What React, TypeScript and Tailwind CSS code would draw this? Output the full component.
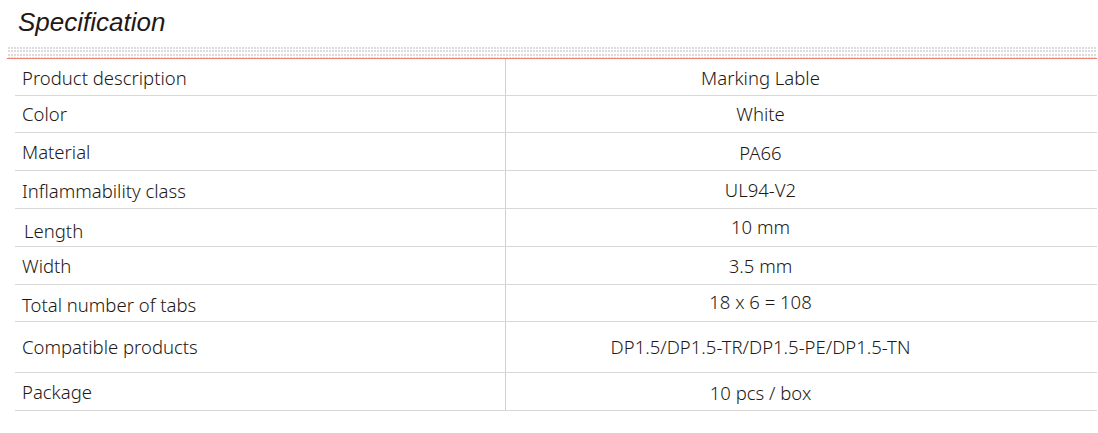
import React from "react";

type SpecRow = {
  label: string;
  value: string;
  rowClass: string;
  labelClass?: string;
  valueClass?: string;
};

const rows: SpecRow[] = [
  { label: "Product description", value: "Marking Lable", rowClass: "h-[37px]", labelClass: "pt-[1px]", valueClass: "pt-[1px]" },
  { label: "Color", value: "White", rowClass: "h-[37px]" },
  { label: "Material", value: "PA66", rowClass: "h-[38px]", valueClass: "pt-[3px]" },
  { label: "Inflammability class", value: "UL94-V2", rowClass: "h-[38px]", labelClass: "pt-[2px]" },
  { label: "Length", value: "10 mm", rowClass: "h-[38px]", labelClass: "pt-[6px] pl-[9px]", valueClass: "pb-[1px]" },
  { label: "Width", value: "3.5 mm", rowClass: "h-[38px]" },
  { label: "Total number of tabs", value: "18 x 6 = 108", rowClass: "h-[37px]", labelClass: "pt-[4px]", valueClass: "pb-[2px]" },
  { label: "Compatible products", value: "DP1.5/DP1.5-TR/DP1.5-PE/DP1.5-TN", rowClass: "h-[51px]" },
  { label: "Package", value: "10 pcs / box", rowClass: "h-[38px]", valueClass: "pt-[2px]" },
];

export default function App() {
  return (
    <div className="w-[1098px] h-[433px] bg-white text-[#231815]">
      {/* Title */}
      <div className="h-[47px] pl-[18px] pt-[5px]">
        <h2 className="italic text-[26px] leading-[34px] font-['Liberation_Sans',Arial,sans-serif]">
          Specification
        </h2>
      </div>

      {/* Dotted band + red rule */}
      <div className="ml-[7px] mr-[1px]">
        <div className="h-[11px] [background:repeating-linear-gradient(90deg,#fff_0_1px,transparent_1px_3px),repeating-linear-gradient(180deg,#dcdcdc_0_2px,#fff_2px_3.5px)]" />
        <div className="h-px bg-[#ee8273]" />
      </div>

      {/* Spec table */}
      <div className="ml-[15px] w-[1082px] font-['Noto_Sans',sans-serif] text-[18.5px] font-light">
        {rows.map((row) => (
          <div
            key={row.label}
            className={`grid grid-cols-[491px_1fr] border-b border-[#d8d8d8] ${row.rowClass}`}
          >
            <div className={`flex items-center pl-[7px] border-r border-[#d0d0d0] ${row.labelClass ?? ""}`}>
              {row.label}
            </div>
            <div className={`flex items-center justify-center pr-[82px] ${row.valueClass ?? ""}`}>
              {row.value}
            </div>
          </div>
        ))}
      </div>
    </div>
  );
}
